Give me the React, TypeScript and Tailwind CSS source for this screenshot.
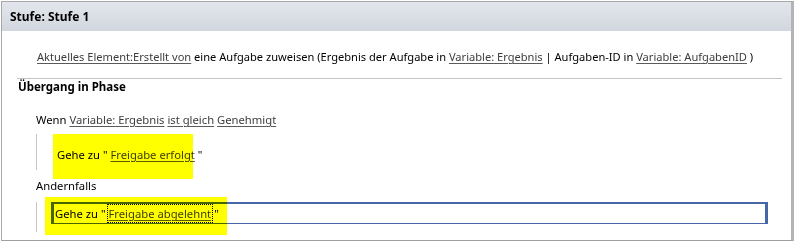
import React from 'react';

function Link({ children }: { children: React.ReactNode }) {
  return <span className="text-[#3d3d3d] underline underline-offset-2 decoration-[#5a5a5a]">{children}</span>;
}

export default function App() {
  return (
    <div className="w-[795px] h-[241px] bg-white pl-[1px] pt-[1px] font-['Noto_Sans',sans-serif] text-[11.25px] leading-[16px] text-black">
      <div className="relative w-[793px] h-[240px] border border-[#a8a8a8] border-r-[3px] border-r-[#b4b4b4] border-b-[#a0a0a0] bg-white overflow-hidden">
        {/* header */}
        <div className="h-[29px] flex items-center pl-[8px] bg-gradient-to-b from-[#e2e6ec] to-[#d2d7df] font-bold text-[12px]">
          Stufe: Stufe 1
        </div>

        <div className="mt-[18px] pl-[35px] whitespace-nowrap text-[11.1px]">
          <Link>Aktuelles Element:Erstellt von</Link> eine Aufgabe zuweisen (Ergebnis der Aufgabe in{' '}
          <Link>Variable: Ergebnis</Link> | Aufgaben-ID in <Link>Variable: AufgabenID</Link> )
        </div>

        <div className="mt-[13px] ml-[15px] w-[765px] border-t border-[#c4c4c4]" />

        <div className="pl-[16px] font-bold text-[11.5px]">Übergang in Phase</div>

        <div className="mt-[17px] pl-[34px]">
          Wenn <Link>Variable: Ergebnis</Link> <Link>ist gleich</Link> <Link>Genehmigt</Link>
        </div>

        {/* Wenn branch */}
        <div className="relative mt-[6px] h-[45px]">
          <div className="ml-[34px] mt-[4px] h-[36px] border-l border-[#c6c6cc] pl-[20px] pt-[13px]">
            Gehe zu " <Link>Freigabe erfolgt</Link> "
          </div>
          <div className="absolute left-[51px] top-0 w-[140px] h-[45px] bg-[#ffff00] mix-blend-multiply" />
        </div>

        <div className="-mt-[1px] pl-[34px]">Andernfalls</div>

        {/* Andernfalls branch */}
        <div className="relative mt-[3px] h-[38px] flex items-start">
          <div className="ml-[34px] mt-[5px] h-[30px] border-l border-[#c6c6cc]" />
          <div className="ml-[14px] mt-[5px] w-[717px] h-[22px] border-[#4766a8] border-t-2 border-b-[1.5px] border-l-[3px] border-r-[3px] pl-[1px] flex items-center">
            <span>Gehe zu "</span>
            <span className="ml-[1px] border border-dotted border-black px-[1px] leading-[17px]">
              <Link>Freigabe abgelehnt</Link>
            </span>
            <span className="ml-[1px]">"</span>
          </div>
          <div className="absolute left-[43px] top-0 w-[182px] h-[38px] bg-[#ffff00] mix-blend-multiply" />
        </div>
      </div>
    </div>
  );
}
